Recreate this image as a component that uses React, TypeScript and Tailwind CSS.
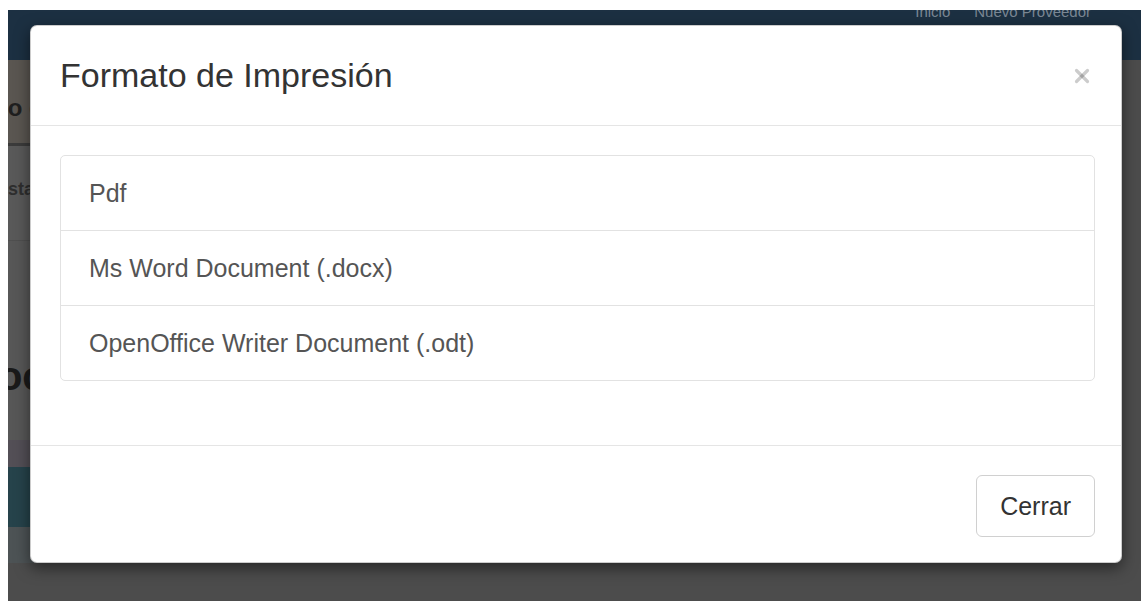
import { X } from 'lucide-react';

const formats = ['Pdf', 'Ms Word Document (.docx)', 'OpenOffice Writer Document (.odt)'];

function PageBehind() {
  return (
    <div className="flex h-full flex-col bg-[#4c4c4c]">
      {/* top navigation, dimmed by the backdrop */}
      <div className="flex h-[50px] shrink-0 justify-end gap-[24px] overflow-hidden bg-[#1c3042] pr-[50px] text-[15px] leading-[15px] text-[#7a8794]">
        <span className="-mt-[6px]">Inicio</span>
        <span className="-mt-[6px]">Nuevo Proveedor</span>
      </div>

      <div className="flex w-[560px] grow flex-col overflow-hidden">
        <div className="h-[83px] overflow-hidden whitespace-nowrap bg-[#5a5651] pt-[34px] text-[24px] font-bold leading-[28px] text-[#1f1f1f]">
          <span className="-ml-[71px] inline-block">Listado de Proveedores</span>
        </div>
        <div className="h-[3px] bg-[#3b3b3b]" />
        <div className="h-[95px] overflow-hidden whitespace-nowrap border-b border-[#4f4f4f] bg-[#595959] pt-[32px] text-[18px] font-bold leading-[22px] text-[#2e2e2e]">
          <span className="-ml-[12px] inline-block">Estado</span>
        </div>
        <div className="h-[199px] overflow-hidden whitespace-nowrap bg-[#575757] pt-[112px] text-[40px] font-bold leading-[46px] text-[#1a1a1a]">
          <span className="-ml-[39px] inline-block">Documentos</span>
        </div>
        <div className="h-[27px] bg-[#534f56]" />
        <div className="h-[60px] bg-[#26434b]" />
        <div className="h-[36px] bg-[#4d5355]" />
        <div className="grow bg-[#4c4c4c]" />
      </div>
    </div>
  );
}

export default function App() {
  return (
    <div
      className="h-[601px] w-[1141px] overflow-hidden bg-white pl-[8px] pt-[10px]"
      style={{ fontFamily: '"Liberation Sans", Arial, sans-serif' }}
    >
      <div className="relative h-[591px] overflow-hidden">
        <PageBehind />

        {/* print format dialog */}
        <div className="absolute left-[22px] top-[15px] w-[1092px] rounded-[7px] border border-black/20 bg-white shadow-[0_5px_15px_rgba(0,0,0,0.5)]">
          <div className="flex items-start justify-between border-b border-[#e5e5e5] pb-[31px] pl-[29px] pr-[27px] pt-[30px]">
            <h4 className="text-[34px] font-normal leading-[38px] text-[#333]">Formato de Impresión</h4>
            <button type="button" className="mr-[1px] mt-[9px] text-black/20" aria-label="Cerrar">
              <X size={22} strokeWidth={3.5} />
            </button>
          </div>

          <div className="pb-[29px] pl-[29px] pr-[26px] pt-[29px]">
            <ul className="mb-[35px] divide-y divide-[#e2e2e2] rounded-[5px] border border-[#e2e2e2]">
              {formats.map((f) => (
                <li key={f} className="cursor-pointer px-[28px] py-[19px] text-[25px] leading-[36px] text-[#555]">
                  {f}
                </li>
              ))}
            </ul>
          </div>

          <div className="flex justify-end border-t border-[#e5e5e5] pb-[25px] pl-[29px] pr-[26px] pt-[29px]">
            <button
              type="button"
              className="rounded-[6px] border border-[#d0d0d0] bg-white px-[23px] py-[12px] text-[25px] leading-[36px] text-[#333]"
            >
              Cerrar
            </button>
          </div>
        </div>
      </div>
    </div>
  );
}
